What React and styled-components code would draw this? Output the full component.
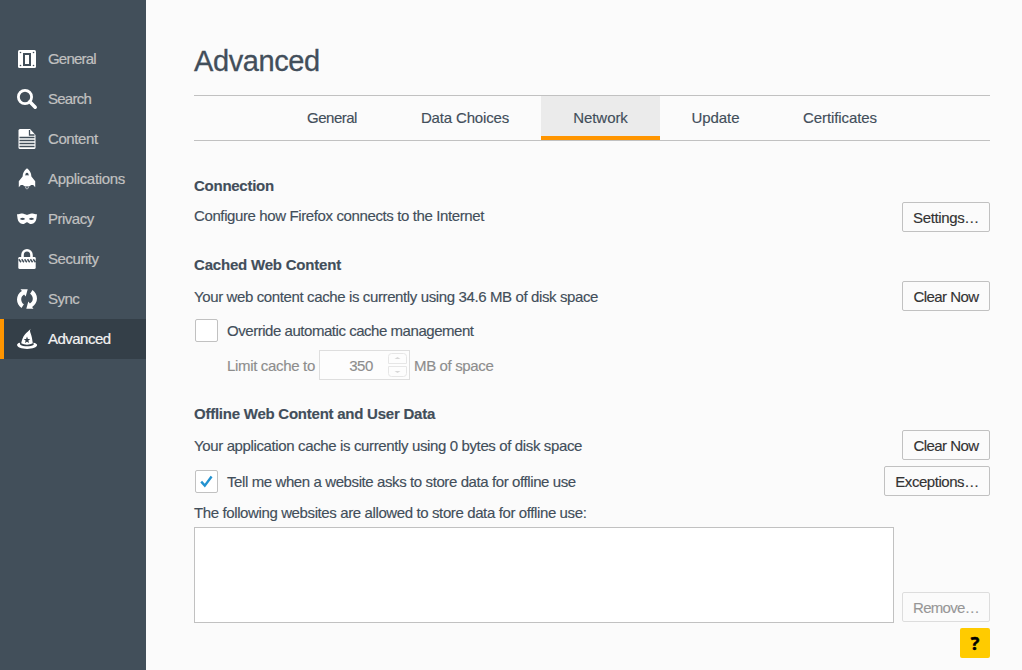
import React from "react";
import styled, { createGlobalStyle } from "styled-components";

const GlobalStyle = createGlobalStyle`
  * { box-sizing: border-box; }
  body {
    margin: 0;
    background: #fbfbfb;
    color: #424e5a;
    font: 15px/20px "Liberation Sans", Arial, sans-serif;
  }
`;

const Page = styled.div`
  display: flex;
  height: 670px;
  overflow: hidden;
`;

const Sidebar = styled.nav`
  width: 146px;
  flex: none;
  padding-top: 39px;
  background: #424f5a;
`;

const Category = styled.div`
  display: flex;
  align-items: center;
  gap: 10px;
  height: 40px;
  padding-left: ${(p) => (p.$active ? 12 : 16)}px;
  border-left: ${(p) => (p.$active ? "4px solid #ff9500" : "none")};
  background: ${(p) => (p.$active ? "#343f48" : "transparent")};
  color: ${(p) => (p.$active ? "#f2f2f2" : "#c1c1c1")};
  -webkit-text-stroke: 0.2px currentColor;
  svg { flex: none; }
`;

const Text = styled.span`
  white-space: nowrap;
  letter-spacing: ${(p) => p.$tracking || 0}px;
`;

const Main = styled.main`
  width: 844px;
  padding: 41px 0 0 48px;
  -webkit-text-stroke: 0.15px currentColor;
`;

const Title = styled.h1`
  margin: 0 0 14px;
  height: 40px;
  font-size: 29px;
  line-height: 40px;
  font-weight: 400;
  letter-spacing: -0.4px;
  -webkit-text-stroke: 0.3px currentColor;
`;

const Tabs = styled.div`
  display: flex;
  justify-content: center;
  height: 46px;
  border-top: 1px solid #c1c1c1;
  border-bottom: 1px solid #c1c1c1;
`;

const Tab = styled.div`
  width: ${(p) => p.$width}px;
  padding-top: 12px;
  text-align: center;
  background: ${(p) => (p.$active ? "#ebebeb" : "transparent")};
  border-bottom: 4px solid ${(p) => (p.$active ? "#ff9500" : "transparent")};
`;

const Group = styled.section`
  margin-top: ${(p) => p.$gap}px;
`;

const Heading = styled.h2`
  margin: 0 0 6px;
  font-size: 15px;
  line-height: 20px;
  font-weight: 700;
`;

const Row = styled.div`
  display: flex;
  align-items: center;
  justify-content: space-between;
  height: 30px;
  margin-top: ${(p) => p.$gap || 0}px;
`;

const Description = styled.div`
  padding-top: ${(p) => (p.$raised ? 0 : 2)}px;
  padding-bottom: ${(p) => (p.$raised ? 2 : 0)}px;
`;

const Button = styled.button`
  flex: none;
  width: ${(p) => p.$width || 88}px;
  height: 30px;
  padding: 1px 0 0;
  border: 1px solid #c1c1c1;
  border-radius: 2px;
  background: #fbfbfb;
  color: #333;
  font: inherit;
  opacity: ${(p) => (p.disabled ? 0.5 : 1)};
`;

const CheckLabel = styled.label`
  display: flex;
  align-items: center;
  gap: 9px;
  height: 23px;
  margin-left: 1px;
`;

const CheckBox = styled.span`
  display: flex;
  align-items: center;
  justify-content: center;
  width: 23px;
  height: 23px;
  border: 1px solid #c1c1c1;
  border-radius: 2px;
  background: #fff;
`;

const CheckText = styled(Text)`
  padding-top: 1px;
`;

const OverrideRow = styled.div`
  margin-top: 8px;
`;

const LimitRow = styled.div`
  display: flex;
  align-items: center;
  height: 30px;
  margin: 8px 0 0 33px;
  color: #8d8d8d;
`;

const LimitLabel = styled.div`
  width: 92px;
  padding-top: 2px;
`;

const Spinner = styled.div`
  display: flex;
  align-items: center;
  justify-content: flex-end;
  gap: 15px;
  width: 91px;
  height: 30px;
  margin-right: 4px;
  padding: 2px 2px 0 0;
  border: 1px solid #dedede;
  background: #fdfdfd;
`;

const Arrows = styled.svg`
  margin-top: -2px;
`;

const Unit = styled.div`
  padding-top: 2px;
`;

const AllowedLabel = styled.div`
  margin-top: 7px;
  height: 20px;
`;

const AllowedRow = styled.div`
  display: flex;
  align-items: flex-end;
  gap: 8px;
  margin-top: 4px;
`;

const ListBox = styled.div`
  width: 700px;
  height: 96px;
  border: 1px solid #c1c1c1;
  background: #fff;
`;

const RemoveSlot = styled.div`
  height: 31px;
`;

const HelpRow = styled.div`
  display: flex;
  justify-content: flex-end;
  margin-top: 5px;
`;

const HelpButton = styled.button`
  width: 30px;
  height: 30px;
  padding: 0;
  border: 0;
  border-radius: 2px;
  background: #ffcb00;
  color: #000;
  font: 700 18px/28px "Open Sans", sans-serif;
  -webkit-text-stroke: 0.5px #000;
`;

const Icon = ({ children }) => (
  <svg width="22" height="22" viewBox="0 0 22 22" fill="#fff">{children}</svg>
);

const icons = {
  general: (
    <Icon>
      <rect x="2" y="2" width="18" height="18" rx="1.5" />
      <g fill="#424f5a">
        <circle cx="4.500" cy="4.500" r=".8" />
        <circle cx="17.500" cy="4.500" r=".8" />
        <circle cx="4.500" cy="17.500" r=".8" />
        <circle cx="17.500" cy="17.500" r=".8" />
        <path d="M7 5h8v13H7z" />
      </g>
      <path d="M9 7h4v9H9z" />
    </Icon>
  ),
  search: (
    <Icon>
      <circle cx="9" cy="9" r="6.600" fill="none" stroke="#fff" strokeWidth="2.800" />
      <path d="M13.800 13.800l5.400 5.400" stroke="#fff" strokeWidth="3.500" strokeLinecap="round" />
    </Icon>
  ),
  content: (
    <Icon>
      <path d="M4 1h10l5.500 6v12.500q0 1.500-1.500 1.500H4q-1.500 0-1.500-1.500v-17Q2.500 1 4 1z" />
      <path d="M13.500 2v5h5M3.500 9.500h15M3.500 12.500h15M3.500 15.500h15M3.500 18.500h15" fill="none" stroke="#424f5a" strokeWidth="1.300" />
    </Icon>
  ),
  applications: (
    <Icon>
      <path d="M11 .3c3 2.200 4.200 5 4.400 8.100l3.800 4.800v6l-2-2.200h-2l-1.700 1.200h-5L6.800 17h-2l-2 2.200v-6l3.800-4.800C6.800 5.300 8 2.500 11 .3z" />
      <path d="M9.300 7.500c0-1.500.5-2.800 1.700-2.800s1.700 1.300 1.700 2.800q-1.700-.7-3.400 0z" fill="#424f5a" />
      <path d="M8.900 18.400h4.200q-.2 2-2.100 3.200-1.900-1.200-2.100-3.200z" fill="#c8ccd0" />
      <path d="M11 18.300l1 1.400-1 1-1-1z" fill="#424f5a" />
    </Icon>
  ),
  privacy: (
    <Icon>
      <path fillRule="evenodd" d="M1 6.200c2.200.5 3.500-.6 5.300-.6 2 0 3.200 1.300 4.700 1.300s2.700-1.300 4.700-1.300c1.800 0 3.100 1.100 5.300.6-.4 2.800-.4 5.800-2 7.800-1.200 1.500-2.900 2.200-4.700 1.900-1.700-.3-2-1.700-3.300-1.700s-1.600 1.400-3.300 1.700c-1.800.3-3.500-.4-4.700-1.900-1.600-2-1.600-5-2-7.800zM3.800 10.900q2.700 2.200 5.400.2-2.500-2.700-5.400-.2zM18.200 10.900q-2.900-2.500-5.400.2 2.700 2 5.400-.2z" />
    </Icon>
  ),
  security: (
    <Icon>
      <path d="M6.500 10V7a4.500 4.800 0 0 1 9 0v3" fill="none" stroke="#fff" strokeWidth="2.600" />
      <path d="M3.500 9h15q1.200 0 1.200 1.200v9.200q0 1.500-1.500 1.500H3.800q-1.500 0-1.500-1.500v-9.200Q2.300 9 3.500 9z" />
      <path d="M2.800 11.300l2.200 3M5.700 11.300l2.200 3M8.600 11.300l2.200 3M11.500 11.300l2.200 3M14.400 11.300l2.200 3M17.300 11.300l2.200 3" fill="none" stroke="#424f5a" strokeWidth="1.500" />
    </Icon>
  ),
  sync: (
    <Icon>
      <path id="sync-arrow" d="M4.500 1.200h7.200L9.700 8.400 8.100 6.600C6.300 7.700 5.200 9.200 5.200 11.200c0 2.200 1 4 2.700 5.100L5.500 20C2.700 18.100 1 15 1 11.500 1 8 2.900 5 5.900 3.100z" />
      <use href="#sync-arrow" transform="rotate(180 11 11)" />
    </Icon>
  ),
  advanced: (
    <Icon>
      <path d="M14.900.8c-1.300 1.500-1 2.600-.2 4.600 1.100 3 1.600 6 2.100 9.900-3 1.900-8.600 1.900-11.600 0 .7-3.700 1.800-6.700 3.700-8.900C10.600 4.500 12.600 3 14.900.8z" />
      <path d="M11 8.600l.9 2.300 2.400.2-1.900 1.500.6 2.400-2-1.300-2 1.300.6-2.400-1.900-1.500 2.400-.2z" fill="#343f48" />
      <path d="M3.800 14.800l.5 1.900c3.200 2 10.200 2 13.400 0l-.3-1.900c2.300.4 3.700 1.200 3.700 2.300 0 2.200-4.400 3.800-10 3.800s-10-1.600-10-3.800c0-1.100.8-1.900 2.700-2.300z" />
    </Icon>
  ),
};

const categories = [
  ["General", "general", -0.8],
  ["Search", "search", -0.75],
  ["Content", "content", -0.4],
  ["Applications", "applications", -0.33],
  ["Privacy", "privacy", -0.5],
  ["Security", "security", -0.45],
  ["Sync", "sync", -0.5],
  ["Advanced", "advanced", -0.52],
];

const tabs = [
  ["General", 114, -0.5],
  ["Data Choices", 152, -0.15],
  ["Network", 119, -0.05],
  ["Update", 111, -0.05],
  ["Certificates", 138, -0.1],
];

export default function App() {
  return (
    <>
      <GlobalStyle />
      <Page>
        <Sidebar>
          {categories.map(([name, icon, tracking]) => (
            <Category key={name} $active={name === "Advanced"}>
              {icons[icon]}
              <Text $tracking={tracking}>{name}</Text>
            </Category>
          ))}
        </Sidebar>
        <Main>
          <Title>Advanced</Title>
          <Tabs>
            {tabs.map(([name, width, tracking]) => (
              <Tab key={name} $width={width} $active={name === "Network"}>
                <Text $tracking={tracking}>{name}</Text>
              </Tab>
            ))}
          </Tabs>

          <Group $gap={35}>
            <Heading><Text $tracking={-0.26}>Connection</Text></Heading>
            <Row>
              <Description $raised><Text $tracking={-0.385}>Configure how Firefox connects to the Internet</Text></Description>
              <Button><Text $tracking={-0.38}>Settings…</Text></Button>
            </Row>
          </Group>

          <Group $gap={23}>
            <Heading><Text $tracking={-0.2}>Cached Web Content</Text></Heading>
            <Row>
              <Description><Text $tracking={-0.38}>Your web content cache is currently using 34.6 MB of disk space</Text></Description>
              <Button><Text $tracking={-0.55}>Clear Now</Text></Button>
            </Row>
            <OverrideRow>
              <CheckLabel>
                <CheckBox />
                <CheckText $tracking={-0.46}>Override automatic cache management</CheckText>
              </CheckLabel>
            </OverrideRow>
            <LimitRow>
              <LimitLabel><Text $tracking={-0.33}>Limit cache to</Text></LimitLabel>
              <Spinner>
                <Text $tracking={-0.4}>350</Text>
                <Arrows width="19" height="24" viewBox="0 0 19 24" fill="none" stroke="#e6e6e6">
                  <path d="M.5 10.500V3.500q0-3 3-3h12q3 0 3 3v7zM.5 13.500h18v7q0 3-3 3h-12q-3 0-3-3z" />
                  <path d="M6.500 6l3-2 3 2zM6.500 18l3 2 3-2z" fill="#d8d8d8" stroke="none" />
                </Arrows>
              </Spinner>
              <Unit><Text $tracking={-0.36}>MB of space</Text></Unit>
            </LimitRow>
          </Group>

          <Group $gap={24}>
            <Heading><Text $tracking={-0.24}>Offline Web Content and User Data</Text></Heading>
            <Row>
              <Description><Text $tracking={-0.37}>Your application cache is currently using 0 bytes of disk space</Text></Description>
              <Button><Text $tracking={-0.55}>Clear Now</Text></Button>
            </Row>
            <Row $gap={6}>
              <CheckLabel>
                <CheckBox>
                  <svg width="13" height="13" viewBox="0 0 13 13" fill="none" stroke="#2292d0" strokeWidth="2.400">
                    <path d="M1.200 6.600l3.600 4L11.600 1.500" />
                  </svg>
                </CheckBox>
                <CheckText $tracking={-0.4}>Tell me when a website asks to store data for offline use</CheckText>
              </CheckLabel>
              <Button $width={106}><Text $tracking={-0.45}>Exceptions…</Text></Button>
            </Row>
            <AllowedLabel>
              <Text $tracking={-0.385}>The following websites are allowed to store data for offline use:</Text>
            </AllowedLabel>
            <AllowedRow>
              <ListBox />
              <RemoveSlot><Button disabled><Text $tracking={-0.7}>Remove…</Text></Button></RemoveSlot>
            </AllowedRow>
            <HelpRow><HelpButton>?</HelpButton></HelpRow>
          </Group>
        </Main>
      </Page>
    </>
  );
}
